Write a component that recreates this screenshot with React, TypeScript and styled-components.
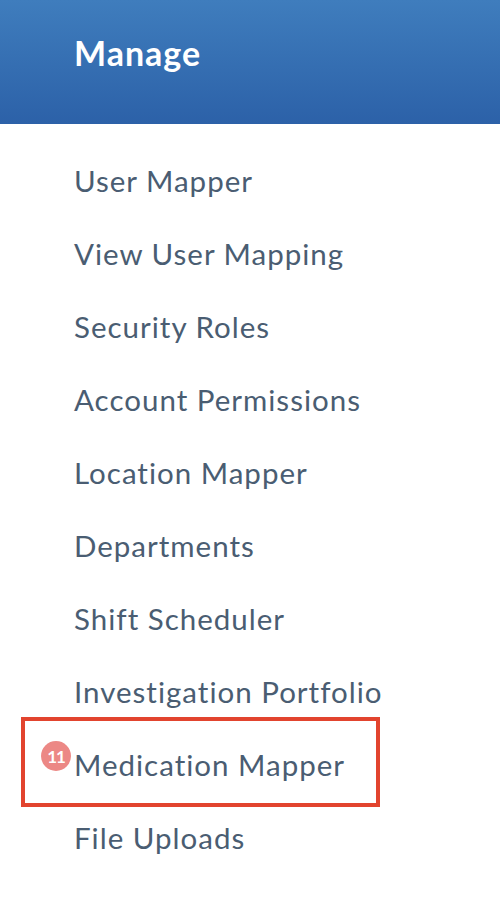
import { createGlobalStyle, styled } from "styled-components";

const items = [
  "User Mapper",
  "View User Mapping",
  "Security Roles",
  "Account Permissions",
  "Location Mapper",
  "Departments",
  "Shift Scheduler",
  "Investigation Portfolio",
  "Medication Mapper",
  "File Uploads",
];

export default function App() {
  return (
    <>
      <GlobalStyle />
      <Wrapper>
        <Header>
          <Title>Manage</Title>
        </Header>
        <List>
          {items.map((item) => (
            <Item key={item}>
              {item === "Medication Mapper" && (
                <>
                  <Highlight />
                  <Badge>11</Badge>
                </>
              )}
              <Label>{item}</Label>
            </Item>
          ))}
        </List>
      </Wrapper>
    </>
  );
}

const GlobalStyle = createGlobalStyle`
  body {
    margin: 0;
    background: #fff;
    font-family: Lato, "Open Sans", sans-serif;
  }
`;

const Wrapper = styled.div`
  width: 500px;
  height: 904px;
  overflow: hidden;
  background: #fff;
`;

const Header = styled.div`
  height: 124px;
  display: flex;
  align-items: center;
  padding: 0 0 20px 74px;
  box-sizing: border-box;
  background: linear-gradient(180deg, #3f7dbd 0%, #2c61a8 100%);
`;

const Title = styled.h1`
  margin: 0;
  font-size: 34px;
  font-weight: 700;
  letter-spacing: 1px;
  color: #fff;
`;

const List = styled.ul`
  list-style: none;
  margin: 0;
  padding: 20px 0 0;
`;

const Item = styled.li`
  position: relative;
  height: 73px;
  display: flex;
  align-items: center;
  padding-left: 74px;
`;

const Label = styled.span`
  position: relative;
  font-size: 29.5px;
  letter-spacing: 1px;
  color: #4a5d72;
  line-height: 1;
`;

const Highlight = styled.div`
  position: absolute;
  left: 21px;
  top: -11px;
  width: 359px;
  height: 90px;
  box-sizing: border-box;
  border: 4px solid #e2442e;
`;

const Badge = styled.span`
  position: absolute;
  left: 41px;
  top: 13px;
  width: 30px;
  height: 30px;
  border-radius: 50%;
  background: #ec8885;
  color: #fff;
  font-size: 17px;
  font-weight: 700;
  letter-spacing: -1px;
  display: flex;
  align-items: center;
  justify-content: center;
  z-index: 1;
`;
